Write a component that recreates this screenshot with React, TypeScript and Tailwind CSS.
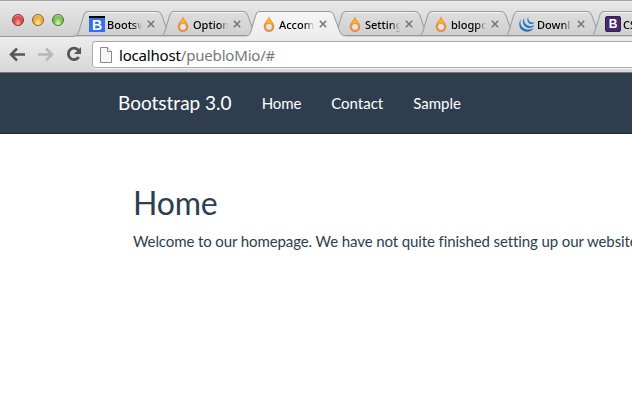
import React from 'react';

type Icon = 'boots' | 'flame' | 'jquery' | 'bootstrap';
const tabs: { label: string; icon: Icon; active?: boolean }[] = [
  { label: 'Bootsw', icon: 'boots' },
  { label: 'Option', icon: 'flame' },
  { label: 'Accom', icon: 'flame', active: true },
  { label: 'Setting', icon: 'flame' },
  { label: 'blogpo', icon: 'flame' },
  { label: 'Downl', icon: 'jquery' },
  { label: 'CSS', icon: 'bootstrap' },
];

function Favicon({ icon }: { icon: Icon }) {
  if (icon === 'boots')
    return (
      <span className="flex h-4 w-4 shrink-0 items-center justify-center border-t-2 border-black bg-[#3470ee] font-['Liberation_Sans',sans-serif] text-[14px] leading-[14px] font-bold text-white">B</span>
    );
  if (icon === 'bootstrap')
    return (
      <span className="flex h-4 w-4 shrink-0 items-center justify-center rounded-[2px] border border-[#342050] bg-[#45296b] font-['Liberation_Sans',sans-serif] text-[12px] leading-[14px] font-bold text-white">B</span>
    );
  if (icon === 'jquery')
    return (
      <svg className="h-4 w-4 shrink-0" viewBox="0 0 16 16" fill="#2774bd">
        <path d="M2 3C-.7 7-.3 11.500 3 14C7 17 12.500 16 15 12C11.500 14 7.500 14 4.500 12C1.500 10 .8 6.500 2 3Z" />
        <path d="M5.500 1.500C3.200 4.500 3.500 8.500 6.500 10.700C9.500 12.900 13.500 12.200 15.500 9C12.800 10.600 10 10.500 7.800 9C5.300 7.300 4.500 4.500 5.500 1.500Z" />
        <path d="M9.500 .5C7.700 3 7.900 5.600 10 7.200C12 8.700 14.500 8.100 15.800 6C13.800 6.900 12.300 6.700 11 5.700C9.300 4.500 8.800 2.600 9.500 .5Z" />
      </svg>
    );
  return (
    <svg className="h-4 w-4 shrink-0" viewBox="0 0 16 16">
      <path d="M8 0C8.600 3.800 13.300 6.500 13.300 10.700A5.300 5.200 0 0 1 2.700 10.700C2.700 6.500 7.400 3.800 8 0Z" fill="#f08a35" />
      <path d="M8 2C8.500 4.500 11 6 11.600 8.200Q8 5.200 4.400 8.200C5 6 7.500 4.500 8 2Z" fill="#ffb916" />
      <circle cx="8" cy="10.800" r="3.400" fill="#e5e3e1" stroke="#c98758" strokeWidth=".5" />
    </svg>
  );
}

function Tab({ label, icon, active }: { label: string; icon: Icon; active?: boolean }) {
  return (
    <div className={`relative -mr-[12px] h-[26px] w-[98px] shrink-0 ${active ? 'z-20' : 'z-0'}`}>
      <svg className="absolute inset-0" width="98" height="26" viewBox="0 0 98 26">
        <defs>
          <linearGradient id="idle" x2="0" y2="1"><stop stopColor="#dedede" /><stop offset="1" stopColor="#cecece" /></linearGradient>
          <linearGradient id="current" x2="0" y2="1"><stop stopColor="#f5f5f5" /><stop offset="1" stopColor="#ededed" /></linearGradient>
        </defs>
        <path d="M0 24.500C2.500 24.500 3 22.500 4 20L8.500 5C9.500 2 10 .5 13 .5H82C85 .5 86 2 87 5L92.500 20C93.500 22.500 94.500 24.500 98 24.500V26H0Z" fill={active ? 'url(#current)' : 'url(#idle)'} />
        <path d="M0 24.500C2.500 24.500 3 22.500 4 20L8.500 5C9.500 2 10 .5 13 .5H82C85 .5 86 2 87 5L92.500 20C93.500 22.500 94.500 24.500 98 24.500" fill="none" stroke="#999" />
        {!active && <path d="M0 24.500H98" stroke="#999" />}
        <path d="M13 1.500H82" stroke="#f6f6f6" />
      </svg>
      <div className="relative flex h-[25px] items-center pl-[14px]">
        <Favicon icon={icon} />
        <span className="ml-[2px] w-[36px] overflow-hidden bg-linear-to-r from-black from-70% to-transparent to-98% bg-clip-text pt-[2px] font-['Noto_Sans',sans-serif] text-[11px] leading-4 font-medium whitespace-nowrap text-transparent">{label}</span>
        <svg className="ml-[4px] shrink-0" width="8" height="8" viewBox="0 0 8 8" stroke="#777" strokeWidth="1.600"><path d="m.8.8 6.400 6.400m0-6.400L.8 7.200" /></svg>
      </div>
    </div>
  );
}

export default function App() {
  return (
    <div className="h-[420px] w-[632px] overflow-hidden bg-white font-['Lato',sans-serif] text-[#2c3e50] [font-variant-ligatures:none]">
      <div className="flex h-[37px] items-end border-t border-[#a5a5a5] bg-linear-to-b from-[#e9e9e9] to-[#cfcfcf] shadow-[inset_0_-1px_#999]">
        <div className="flex h-[36px] w-[75px] shrink-0 items-start gap-2 pt-[13px] pl-[12px]">
          <span className="h-3 w-3 rounded-full border border-[#83302e] bg-radial-[at_50%_90%] from-[#ffb5ad] via-[#e04b49] to-[#b42d2d] shadow-[inset_0_1px_1px_#ffffff99]" />
          <span className="h-3 w-3 rounded-full border border-[#936022] bg-radial-[at_50%_90%] from-[#fff3a0] via-[#efb141] to-[#cc8423] shadow-[inset_0_1px_1px_#ffffff99]" />
          <span className="h-3 w-3 rounded-full border border-[#477635] bg-radial-[at_50%_90%] from-[#dcffb0] via-[#80c35a] to-[#4e9235] shadow-[inset_0_1px_1px_#ffffff99]" />
        </div>
        {tabs.map((tab) => <Tab key={tab.label} {...tab} />)}
      </div>
      <div className="flex h-9 items-start border-b border-[#777] bg-linear-to-b from-[#ededed] to-[#d7d7d7] pt-1">
        <svg className="mt-[5px] ml-[9px] shrink-0" width="76" height="18" viewBox="0 0 76 18" fill="none" strokeWidth="2.500">
          <path d="M16 8.500H3M8 2.500L2 8.500L8 14.500" stroke="#555" />
          <path d="M29 8.500H42M37 2.500L43 8.500L37 14.500" stroke="#b8b8b8" />
          <path d="M69.500 4.300A5.700 5.700 0 1 0 69.800 11" stroke="#555" strokeWidth="2.800" />
          <path d="M72 1V8H65Z" fill="#555" />
        </svg>
        <div className="ml-[7px] flex h-[27px] w-[560px] shrink-0 items-center rounded-[3px] border border-[#aaa] bg-white pl-[7px] shadow-[0_1px_#f4f4f4]">
          <svg className="shrink-0" width="12" height="16" viewBox="0 0 12 16"><path d="M.5.5H7.500L11.500 4.500V15.500H.5Z" fill="#f7f7f7" stroke="#888" /><path d="M7.500.5V4.500H11.500" fill="white" stroke="#888" /></svg>
          <span className="ml-[7px] font-['Noto_Sans',sans-serif] text-[15px] leading-5 tracking-[-0.18px] text-[#777]"><span className="text-black">localhost</span>/puebloMio/#</span>
        </div>
      </div>
      <nav className="flex h-[61px] items-center border-b border-[#202d3b] bg-[#2f3e4f] pl-[118px] text-[15px] text-white">
        <span className="mr-[30px] text-[19px]">Bootstrap 3.0</span>
        <span className="mr-[30px] tracking-[-0.1px]">Home</span>
        <span className="mr-[30px]">Contact</span>
        <span>Sample</span>
      </nav>
      <main className="pt-[51px] pl-[133px]">
        <h1 className="text-[32px] leading-9 tracking-[-0.2px]">Home</h1>
        <p className="mt-[10px] text-[15px] leading-[21px] tracking-[-0.1px] whitespace-nowrap">Welcome to our homepage. We have not quite finished setting up our website.</p>
      </main>
    </div>
  );
}
